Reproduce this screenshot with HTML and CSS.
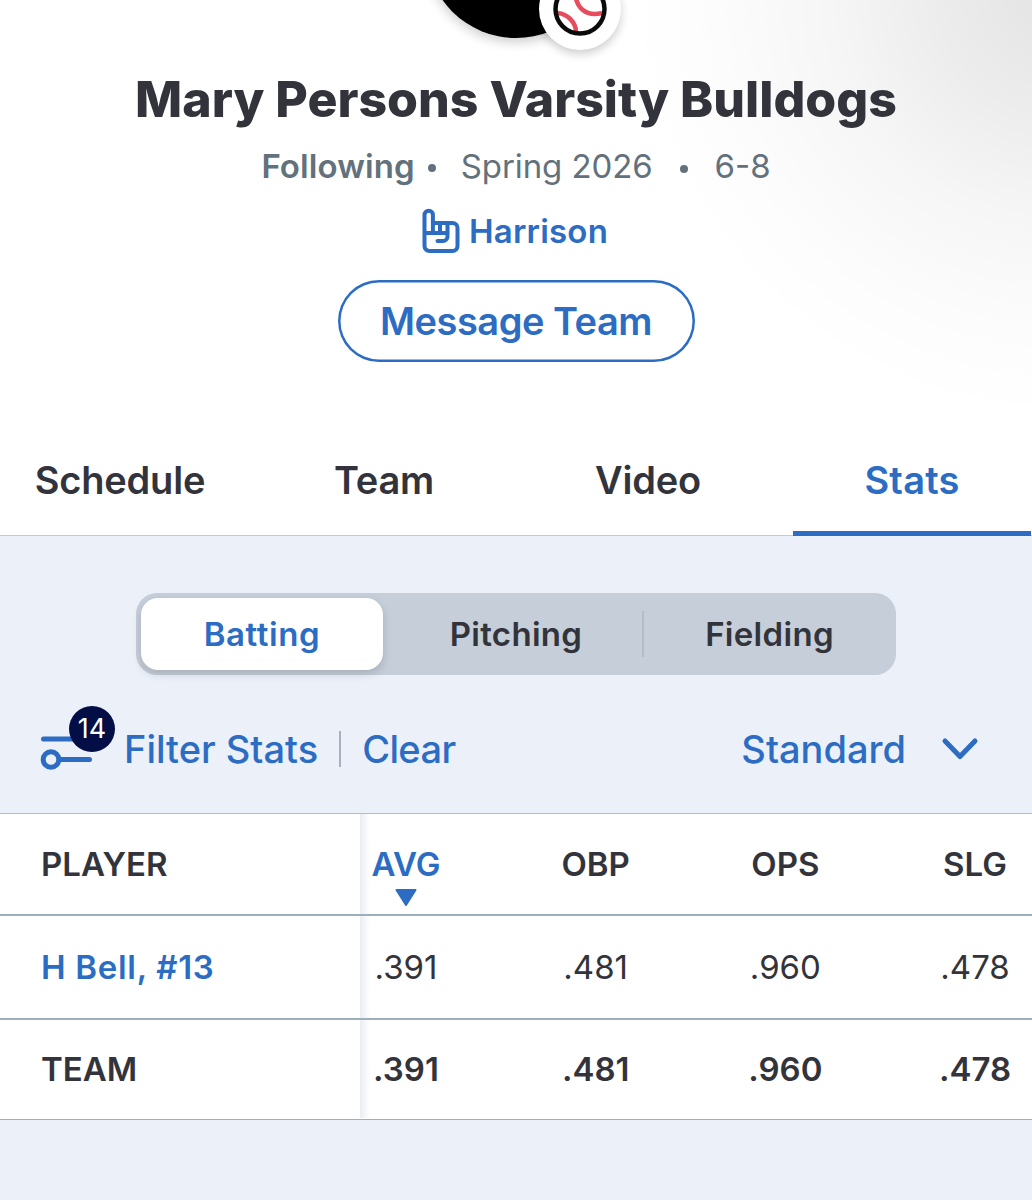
FILE: index.html
```
<!DOCTYPE html>
<html lang="en">

<head>
    <meta charset="UTF-8">
    <meta name="viewport" content="width=device-width, initial-scale=1.0">
    <title>Mary Persons Varsity Bulldogs</title>
    <link rel="stylesheet" href="styles.css">
</head>

<body>
    <header class="hero">
        <div class="avatar">
            <div class="sport">
                <svg viewBox="0 0 54 54" width="54" height="54">
                    <circle cx="27" cy="27" r="24.5" fill="#fff" />
                    <g fill="none" stroke="#e64c5b" stroke-width="4.5">
                        <path d="M22 8C22 26 33 35 49 31" />
                        <path d="M5 31C14 32 23 40 23 50" />
                    </g>
                    <circle cx="27" cy="27" r="24.5" fill="none" stroke="#0b0b0b" stroke-width="4.5" />
                </svg>
            </div>
        </div>
        <h1 class="team-name">Mary Persons Varsity Bulldogs</h1>
        <div class="meta">
            <span class="following">Following</span>
            <i class="dot"></i>
            <span class="season">Spring 2026</span>
            <i class="dot dot-low"></i>
            <span class="record">6-8</span>
        </div>
        <a class="fan">
            <svg class="fan-icon" viewBox="0 0 38 46" width="38" height="46" fill="none" stroke="#2c6dc3" stroke-width="4" stroke-linecap="round" stroke-linejoin="round">
                <path d="M2.500 25V7a4.200 4.200 0 0 1 8.400 0V25M10.900 15H30.500a5 5 0 0 1 5 5V38a5 5 0 0 1-5 5H7.500a5 5 0 0 1-5-5V25H25" />
                <path d="M18 16V24M25.500 16V28.500a4.500 4.500 0 0 1-4.500 4.500H15.500" />
            </svg>
            <span class="fan-name">Harrison</span>
        </a>
        <button class="message">Message Team</button>
        <nav class="tabs">
            <a class="tab">Schedule</a>
            <a class="tab">Team</a>
            <a class="tab">Video</a>
            <a class="tab active">Stats</a>
        </nav>
    </header>

    <main>
        <div class="segments">
            <button class="segment selected">Batting</button>
            <button class="segment">Pitching</button>
            <button class="segment last">Fielding</button>
        </div>

        <div class="filters">
            <div class="filter-icon">
                <svg viewBox="0 0 54 36" width="54" height="36" fill="none" stroke="#2c6dc3" stroke-width="5" stroke-linecap="round">
                    <path d="M3.500 4H40M20 24.500H49.500" />
                    <circle cx="11" cy="24.500" r="7.800" />
                </svg>
                <span class="badge">14</span>
            </div>
            <a class="filter-link">Filter Stats</a>
            <i class="divider"></i>
            <a class="clear-link">Clear</a>
            <a class="standard">Standard</a>
            <svg class="chevron" viewBox="0 0 38 24" width="38" height="24" fill="none" stroke="#2c6dc3" stroke-width="5" stroke-linecap="round" stroke-linejoin="round">
                <path d="M4 4L19 19.500L34 4" />
            </svg>
        </div>

        <div class="table">
            <div class="row head">
                <div class="player">PLAYER</div>
                <div class="stats">
                    <span class="sorted">AVG
                        <svg class="arrow" viewBox="0 0 22 17" width="22" height="17">
                            <path d="M1.500 1H20.500L11 16Z" fill="#2c6dc3" stroke="#2c6dc3" stroke-width="2" stroke-linejoin="round" />
                        </svg>
                    </span>
                    <span>OBP</span>
                    <span>OPS</span>
                    <span>SLG</span>
                </div>
            </div>
            <div class="row">
                <div class="player link">H Bell, #13</div>
                <div class="stats">
                    <span>.391</span>
                    <span>.481</span>
                    <span>.960</span>
                    <span>.478</span>
                </div>
            </div>
            <div class="row total">
                <div class="player">TEAM</div>
                <div class="stats">
                    <span>.391</span>
                    <span>.481</span>
                    <span>.960</span>
                    <span>.478</span>
                </div>
            </div>
        </div>
    </main>
</body>

</html>
```
FILE: styles.css
```
* {
    box-sizing: border-box;
}

body {
    margin: 0;
    width: 1032px;
    height: 1200px;
    overflow: hidden;
    background: #ebf0f9;
    color: #33343b;
    font-family: Inter, "Liberation Sans", sans-serif;
}

button {
    font-family: inherit;
    cursor: pointer;
}

svg {
    display: block;
}

.hero {
    display: flex;
    flex-direction: column;
    align-items: center;
    height: 536px;
    border-bottom: 1px solid #c3c9d3;
    background: radial-gradient(ellipse 430px 430px at 1060px -10px, #e3e3e3 0%, #ececec 28%, #f6f6f6 54%, #fcfcfc 80%, #fff 100%);
}

.avatar {
    position: relative;
    flex: none;
    width: 180px;
    height: 180px;
    margin-top: -142px;
    border-radius: 50%;
    background: #000;
    box-shadow: 0 4px 12px rgba(0, 0, 0, 0.2);
}

.sport {
    position: absolute;
    right: -15px;
    bottom: -12px;
    display: flex;
    justify-content: center;
    align-items: center;
    width: 82px;
    height: 82px;
    border-radius: 50%;
    background: #fff;
    box-shadow: 0 4px 10px rgba(0, 0, 0, 0.2);
}

.team-name {
    margin: 31px 0 0;
    font-size: 50px;
    line-height: 60px;
    font-weight: 800;
    white-space: nowrap;
}

.meta {
    display: flex;
    align-items: center;
    height: 40px;
    margin-top: 17px;
    color: #63717d;
    font-size: 33px;
    line-height: 40px;
}

.following {
    font-weight: 600;
    letter-spacing: 0.1px;
}

.season {
    letter-spacing: -0.1px;
}

.dot {
    width: 8px;
    height: 8px;
    margin: 4px 25px 0 13px;
    border-radius: 50%;
    background: #63717d;
}

.dot-low {
    margin: 6px 27px 0 27px;
}

.fan {
    display: flex;
    align-items: center;
    gap: 9px;
    height: 46px;
    margin: 22px 2px 0 0;
    color: #2c6dc3;
    font-size: 33px;
    font-weight: 600;
    letter-spacing: 0.2px;
}

.message {
    flex: none;
    width: 357px;
    height: 82px;
    margin-top: 26px;
    padding: 0;
    border: none;
    border-radius: 41px;
    background: #fff;
    box-shadow: inset 0 0 0 2.5px #2c6dc3;
    color: #2c6dc3;
    font-size: 38px;
    font-weight: 600;
    letter-spacing: -0.5px;
}

.tabs {
    display: grid;
    grid-template-columns: repeat(4, 238px);
    gap: 26px;
    flex: none;
    width: 100%;
    height: 111px;
    margin-top: 63px;
    padding-left: 1px;
}

.tab {
    display: flex;
    justify-content: center;
    align-items: center;
    border-top: 3px solid transparent;
    border-bottom: 5px solid transparent;
    font-size: 38px;
    font-weight: 600;
    letter-spacing: -0.2px;
}

.tab.active {
    border-bottom-color: #2c6dc3;
    color: #2c6dc3;
    letter-spacing: 0.2px;
}

.segments {
    display: grid;
    grid-template-columns: repeat(3, 1fr);
    width: 760px;
    height: 82px;
    margin: 57px auto 0;
    padding: 5px;
    border-radius: 21px;
    background: #c5ced9;
}

.segment {
    padding: 0;
    border: none;
    background: none;
    color: #33343b;
    font-size: 33px;
    font-weight: 600;
    letter-spacing: 0.3px;
}

.segment.selected {
    width: 242px;
    border-radius: 17px;
    background: #fff;
    box-shadow: 0 4px 10px rgba(0, 0, 0, 0.15);
    color: #2c6dc3;
    letter-spacing: 0.6px;
}

.segment.last {
    margin: 13px 0 13px 1px;
    padding-left: 4px;
    border-left: 2px solid #b3bcc7;
}

.filters {
    display: flex;
    align-items: center;
    height: 138px;
    padding: 9px 53px 0 40px;
    color: #2c6dc3;
    font-size: 38px;
    font-weight: 500;
}

.filter-icon {
    position: relative;
    margin-top: 8px;
}

.badge {
    position: absolute;
    left: 29px;
    top: -29px;
    width: 46px;
    height: 46px;
    border-radius: 50%;
    background: #020e45;
    color: #fff;
    font-size: 27px;
    font-weight: 400;
    line-height: 46px;
    text-align: center;
}

.filter-link {
    margin-left: 30px;
}

.divider {
    width: 2px;
    height: 36px;
    margin: 0 21px;
    background: #a6b0c0;
}

.clear-link {
    letter-spacing: -0.6px;
}

.standard {
    margin-left: auto;
}

.chevron {
    margin-left: 35px;
}

.table {
    border-top: 1px solid #b2bfca;
}

.row {
    display: flex;
    height: 104px;
    border-bottom: 2px solid #9dafbd;
    background: #fff;
    font-size: 33px;
}

.row.head {
    height: 102px;
}

.row.total {
    height: 100px;
    padding-bottom: 1px;
    border-bottom-width: 1px;
}

.player {
    display: flex;
    align-items: center;
    width: 360px;
    padding-left: 41px;
    font-weight: 600;
}

.link {
    color: #2c6dc3;
    letter-spacing: 0.7px;
}

.stats {
    display: grid;
    grid-template-columns: repeat(4, 92px);
    gap: 97.700px;
    align-items: center;
    width: 672px;
    background: linear-gradient(90deg, #e9ecf2, #fff 10px);
    text-align: center;
}

.head .stats,
.total .stats {
    font-weight: 600;
}

.sorted {
    position: relative;
    color: #2c6dc3;
}

.arrow {
    position: absolute;
    left: 35px;
    top: 45px;
}
```
